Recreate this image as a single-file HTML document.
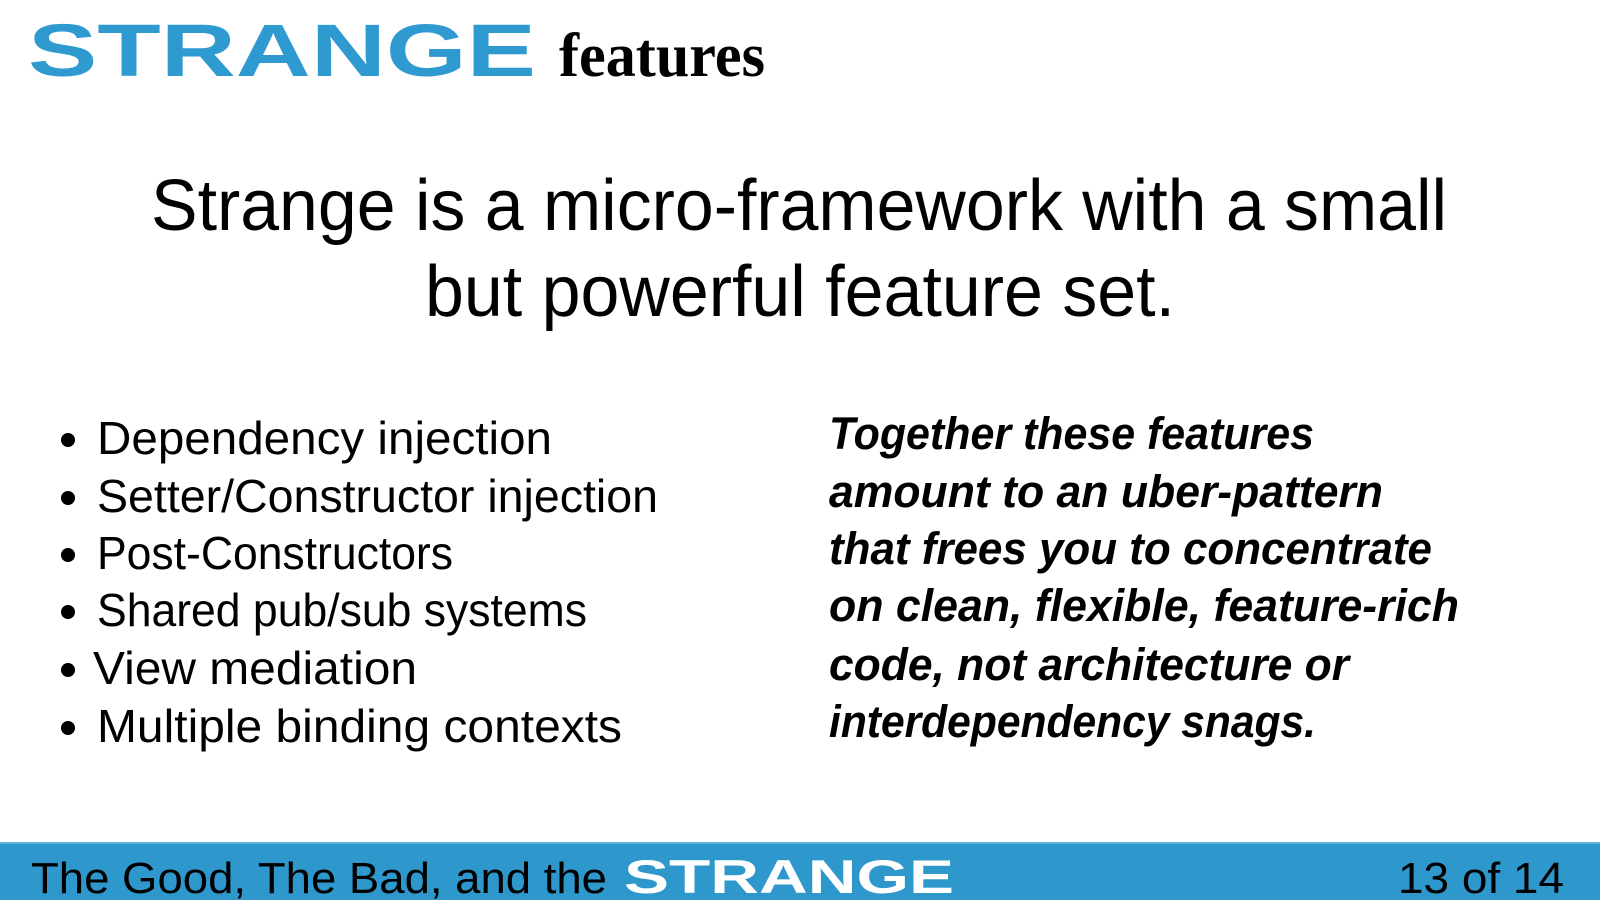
<!DOCTYPE html>
<html><head><meta charset="utf-8"><style>
html,body{margin:0;padding:0;background:#fff;width:1600px;height:900px;overflow:hidden}
svg{display:block}
.s{font-family:"Liberation Sans",sans-serif}
</style></head><body>
<svg width="1600" height="900" viewBox="0 0 1600 900" xmlns="http://www.w3.org/2000/svg">
<text x="28" y="76" class="s" font-size="74" font-weight="bold" fill="#2e9ad0" textLength="508" lengthAdjust="spacingAndGlyphs">STRANGE</text>
<text x="559" y="76" font-family="Liberation Serif,serif" font-weight="bold" font-size="62" fill="#000" textLength="206" lengthAdjust="spacingAndGlyphs">features</text>

<g class="s" font-size="72" fill="#000">
<text x="151" y="230" textLength="1296" lengthAdjust="spacingAndGlyphs">Strange is a micro-framework with a small</text>
<text x="425" y="316" textLength="750" lengthAdjust="spacingAndGlyphs">but powerful feature set.</text>
</g>

<g class="s" font-size="46" fill="#000">
<circle cx="68" cy="440" r="7"/><text x="97" y="454" textLength="455" lengthAdjust="spacingAndGlyphs">Dependency injection</text>
<circle cx="68" cy="498" r="7"/><text x="97" y="512" textLength="561" lengthAdjust="spacingAndGlyphs">Setter/Constructor injection</text>
<circle cx="68" cy="555" r="7"/><text x="97" y="569" textLength="356" lengthAdjust="spacingAndGlyphs">Post-Constructors</text>
<circle cx="68" cy="612" r="7"/><text x="97" y="626" textLength="490" lengthAdjust="spacingAndGlyphs">Shared pub/sub systems</text>
<circle cx="68" cy="670" r="7"/><text x="93" y="684" textLength="324" lengthAdjust="spacingAndGlyphs">View mediation</text>
<circle cx="68" cy="728" r="7"/><text x="97" y="742" textLength="525" lengthAdjust="spacingAndGlyphs">Multiple binding contexts</text>
</g>

<g class="s" font-size="45" font-weight="bold" font-style="italic" fill="#000">
<text x="829" y="449" textLength="485" lengthAdjust="spacingAndGlyphs">Together these features</text>
<text x="829" y="507" textLength="554" lengthAdjust="spacingAndGlyphs">amount to an uber-pattern</text>
<text x="829" y="564" textLength="603" lengthAdjust="spacingAndGlyphs">that frees you to concentrate</text>
<text x="829" y="621" textLength="630" lengthAdjust="spacingAndGlyphs">on clean, flexible, feature-rich</text>
<text x="829" y="680" textLength="520" lengthAdjust="spacingAndGlyphs">code, not architecture or</text>
<text x="829" y="737" textLength="487" lengthAdjust="spacingAndGlyphs">interdependency snags.</text>
</g>

<rect x="0" y="842" width="1600" height="58" fill="#2e97cc"/>
<rect x="0" y="842" width="1600" height="2" fill="#5fb3dc"/>
<g class="s" font-size="44" fill="#000">
<text x="31" y="893" textLength="576" lengthAdjust="spacingAndGlyphs">The Good, The Bad, and the</text>
<text x="1398" y="893" textLength="166" lengthAdjust="spacingAndGlyphs">13 of 14</text>
</g>
<text x="624" y="893" class="s" font-size="47" font-weight="bold" fill="#fff" textLength="330" lengthAdjust="spacingAndGlyphs">STRANGE</text>
</svg>
</body></html>
